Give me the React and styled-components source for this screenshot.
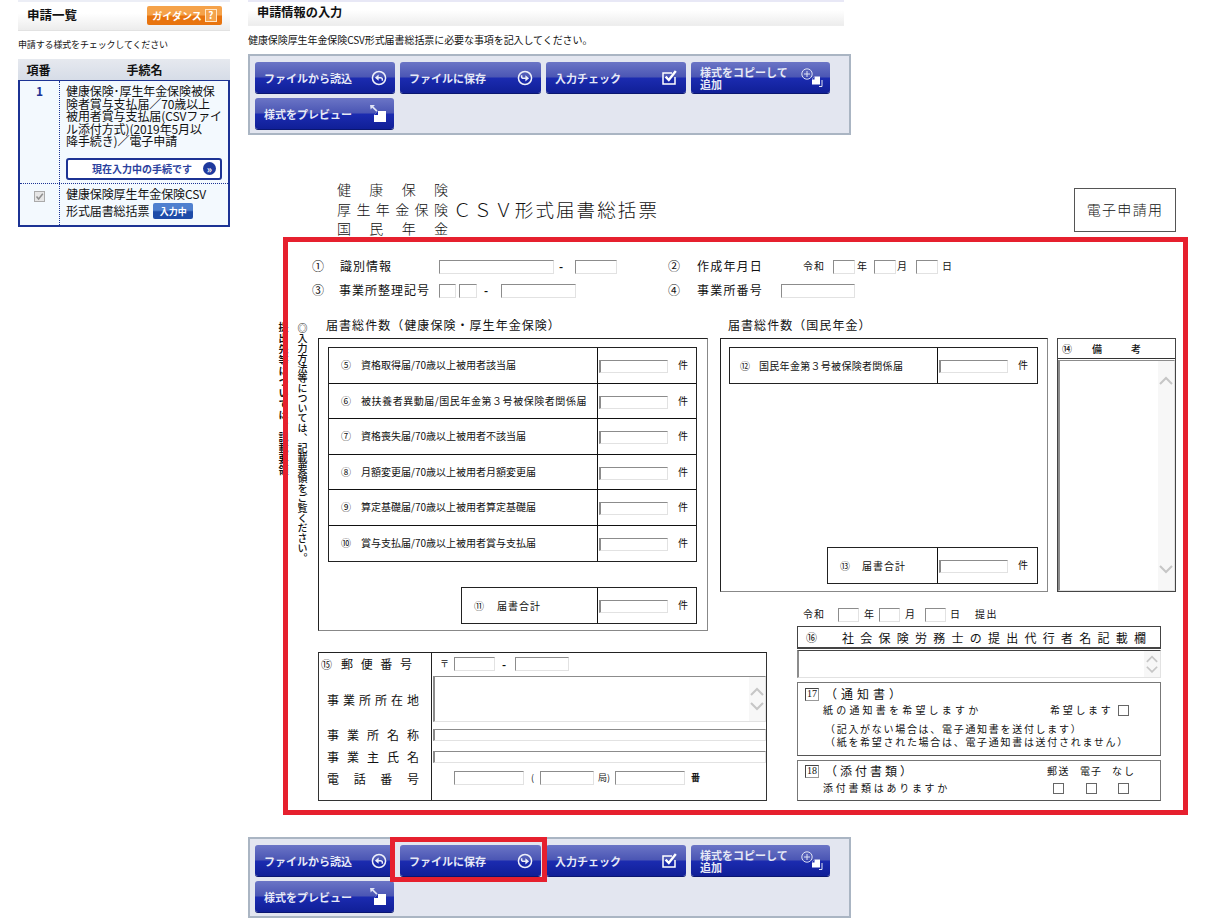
import React from "react";
import styled, { createGlobalStyle } from "styled-components";

const Global = createGlobalStyle`
  html, body { margin: 0; padding: 0; background: #fff; }
  body { font-family: "Noto Sans CJK JP", "Liberation Sans", sans-serif; color: #111; overflow: hidden; }
  * { box-sizing: border-box; }
`;

const Page = styled.div`
  position: relative;
  display: flex;
  width: 1211px;
  height: 920px;
  overflow: hidden;
`;

/* ---------- sidebar ---------- */
const Sidebar = styled.aside`
  flex: none;
  width: 212px;
  margin-left: 18px;
`;
const SideHeader = styled.header`
  display: flex;
  align-items: center;
  justify-content: space-between;
  height: 31px;
  padding: 0 8px 2px 9px;
  border-top: 2px solid #eceef6;
  border-bottom: 1px solid #e2e2e2;
  background: linear-gradient(#fff 40%, #ececec);
`;
const SideTitle = styled.h2`
  margin: 0;
  font-size: 12.5px;
  line-height: 16px;
  font-weight: 700;
`;
const GuideButton = styled.div`
  display: flex;
  align-items: center;
  justify-content: center;
  gap: 3px;
  width: 75px;
  height: 19px;
  border-radius: 2px;
  background: linear-gradient(#f5a24a 0 48%, #e8740f 52% 100%);
  color: #fff;
  font-size: 10px;
  font-weight: 700;
`;
const GuideMark = styled.span`
  display: flex;
  align-items: center;
  justify-content: center;
  width: 12px;
  height: 13px;
  border: 1px solid #ffe6c8;
  background: #f4a34c;
  font-size: 10px;
  line-height: 1;
`;
const SideHint = styled.p`
  margin: 8px 0 8px;
  font-size: 9px;
  line-height: 12px;
  letter-spacing: -0.15px;
  white-space: nowrap;
`;
const ProcHead = styled.div`
  display: flex;
  height: 21px;
  align-items: center;
  background: linear-gradient(#e6e9ef, #d6dce7);
  font-size: 12px;
  font-weight: 700;
`;
const ProcHeadNo = styled.span`
  width: 41px;
  text-align: center;
`;
const ProcHeadName = styled.span`
  flex: 1;
  text-align: center;
`;
const ProcBody = styled.div`
  height: 147px;
  border: 2px solid #1c3394;
  border-top-width: 1.5px;
  background: #f3f9fe;
`;
const ProcRow = styled.div`
  display: flex;
  height: ${(p) => p.$h}px;
  border-bottom: ${(p) => (p.$divide ? "1px dotted #1c3394" : "none")};
`;
const ProcNo = styled.div`
  flex: none;
  width: 40px;
  padding-top: ${(p) => p.$top}px;
  border-right: 1px dotted #1c3394;
  display: flex;
  justify-content: center;
  align-items: flex-start;
  color: #1c3394;
  font-size: 12px;
  font-weight: 700;
  line-height: 14px;
`;
const ProcCell = styled.div`
  flex: 1;
  padding: ${(p) => p.$top}px 6px 0 6px;
`;
const ProcText = styled.div`
  font-size: 12px;
  line-height: ${(p) => p.$lh}px;
  letter-spacing: -0.1px;
  white-space: nowrap;
`;
const CurrentButton = styled.div`
  display: flex;
  align-items: center;
  justify-content: flex-end;
  gap: 11px;
  width: 156px;
  height: 22px;
  margin-top: 10px;
  padding-right: 4px;
  border: 2px solid #1c3394;
  border-radius: 3px;
  background: #fff;
  color: #2b419e;
  font-size: 10px;
  font-weight: 700;
`;
const CurrentMark = styled.span`
  display: flex;
  align-items: center;
  justify-content: center;
  width: 13px;
  height: 13px;
  border-radius: 50%;
  background: #1f3a9e;
  color: #fff;
  font-size: 10px;
  line-height: 1;
`;
const CheckedBox = styled.span`
  display: flex;
  width: 11px;
  height: 11px;
  border: 1px solid #aaa;
  background: #e6e6e6;
`;
const InputBadge = styled.span`
  display: inline-flex;
  align-items: center;
  justify-content: center;
  width: 40px;
  height: 16px;
  margin-left: 4px;
  vertical-align: top;
  margin-top: 1px;
  border-radius: 2px;
  background: linear-gradient(#4f80cf 0 45%, #1d4ba8 55% 100%);
  color: #fff;
  font-size: 9px;
  font-weight: 700;
  letter-spacing: 0;
`;

/* ---------- main ---------- */
const Main = styled.main`
  flex: none;
  width: 945px;
  margin-left: 18px;
`;
const MainHeader = styled.header`
  display: flex;
  align-items: center;
  width: 596px;
  height: 26px;
  padding: 0 0 3px 9px;
  border-top: 2px solid #e8e8f6;
  border-bottom: 1px solid #eee;
  background: linear-gradient(#fff 35%, #ededed);
`;
const MainTitle = styled.h1`
  margin: 0;
  font-size: 12.2px;
  line-height: 14px;
  font-weight: 700;
`;
const MainHint = styled.p`
  margin: 8px 0 8px;
  font-size: 10px;
  line-height: 12px;
  letter-spacing: -0.08px;
  white-space: nowrap;
`;
const Toolbar = styled.div`
  display: flex;
  flex-wrap: wrap;
  align-content: flex-start;
  gap: 5px 5px;
  width: 603px;
  height: 81px;
  padding: 6px 5px;
  border: 2px solid #aab5c3;
  background: #e3e6f0;
`;
const ToolButton = styled.div`
  display: flex;
  align-items: center;
  justify-content: space-between;
  width: ${(p) => p.$w}px;
  height: 31px;
  padding: 0 ${(p) => p.$pr ?? 8}px 0 9px;
  border-radius: 3px;
  background: linear-gradient(#6b75c6 0, #4b56b4 48%, #1b2bb0 52%, #101f97 100%);
  box-shadow: 0 1px 0 #0a1670;
  color: #e6e9f6;
  font-size: 11px;
  font-weight: 700;
  line-height: 12px;
`;
const ToolLabel = styled.span`
  display: block;
  max-width: 92px;
`;

/* ---------- form sheet ---------- */
const Sheet = styled.section`
  width: 928px;
  margin-top: 45px;
  margin-bottom: 36px;
`;
const TitleRow = styled.div`
  display: flex;
  justify-content: space-between;
  align-items: flex-start;
  height: 60px;
  padding-left: 89px;
`;
const TitleLines = styled.div`
  display: flex;
  flex-direction: column;
`;
const TitleLine = styled.div`
  display: flex;
  align-items: center;
  height: 19.5px;
  font-size: 14px;
  line-height: 19.5px;
  font-weight: 300;
`;
const Justified = styled.span`
  display: block;
  flex: none;
  width: ${(p) => p.$w}px;
  margin-left: ${(p) => p.$ml || 0}px;
  font-size: ${(p) => p.$s || 12}px;
  text-align: justify;
  text-align-last: justify;
  white-space: normal;
`;
const TitleBig = styled.span`
  margin-left: 5px;
  font-size: 18.5px;
  letter-spacing: 2.1px;
  white-space: nowrap;
`;
const EBadge = styled.div`
  display: flex;
  align-items: center;
  justify-content: center;
  width: 102px;
  height: 44px;
  margin-top: 8px;
  padding-bottom: 2px;
  border: 1px solid #555;
  font-size: 14px;
  font-weight: 300;
  letter-spacing: 1.3px;
`;
const InfoRow = styled.div`
  display: flex;
  align-items: center;
  height: 14px;
  margin: ${(p) => p.$mt}px 0 0 ${(p) => p.$ml || 0}px;
  & > span { padding-bottom: 3px; }
`;
const Txt = styled.span`
  display: block;
  flex: none;
  width: ${(p) => (p.$w ? `${p.$w}px` : "auto")};
  margin-left: ${(p) => p.$ml || 0}px;
  font-size: ${(p) => p.$s || 12}px;
  letter-spacing: ${(p) => p.$ls || 0}px;
  font-weight: ${(p) => p.$b || 400};
  line-height: 14px;
  white-space: nowrap;
`;
const Field = styled.input.attrs({ type: "text", readOnly: true })`
  display: block;
  flex: none;
  width: ${(p) => (p.$w ? `${p.$w}px` : "100%")};
  height: ${(p) => p.$h || 14}px;
  margin: ${(p) => p.$mt || 0}px 0 0 ${(p) => p.$ml || 0}px;
  padding: 0;
  border: 1px solid #e2e2e2;
  border-top-color: #8c8c8c;
  border-left: ${(p) => (p.$thick ? 2 : 1)}px solid #8c8c8c;
  background: #fff;
  outline: none;
`;
const SheetGrid = styled.div`
  display: grid;
  grid-template-columns: 19px 23px 390px 12px 47px 30px 364px 15px;
  grid-template-rows: 22px 254px 16px 23px 170px;
  margin: 18px 0 0 28px;
`;
const Area = styled.div`
  grid-column: ${(p) => p.$c};
  grid-row: ${(p) => p.$r};
  min-width: 0;
`;
const VerticalNote = styled.div`
  padding-top: ${(p) => p.$pt}px;
  writing-mode: vertical-rl;
  font-size: 10px;
  line-height: 14px;
  letter-spacing: ${(p) => p.$ls || 0}px;
  font-weight: ${(p) => p.$b || 500};
  white-space: nowrap;
`;
const SectionHead = styled.div`
  padding: 2px 0 0 ${(p) => p.$pl}px;
  font-size: 12px;
  letter-spacing: 1.05px;
  line-height: 14px;
  white-space: nowrap;
`;
const CountBox = styled.div`
  display: flex;
  flex-direction: column;
  justify-content: ${(p) => (p.$spread ? "space-between" : "flex-start")};
  flex: none;
  width: ${(p) => (p.$w ? `${p.$w}px` : "auto")};
  height: 100%;
  padding: 8px 9px 7px 9px;
  border: 1px solid #222;
  border-right-color: #888;
  border-bottom-color: #888;
`;
const CountTable = styled.div`
  flex: none;
  width: ${(p) => p.$w}px;
  margin: ${(p) => p.$mt || 0}px 0 0 ${(p) => p.$ml || 0}px;
  border: 1px solid #222;
`;
const CountRow = styled.div`
  display: flex;
  height: ${(p) => p.$h || 35.5}px;
  border-bottom: ${(p) => (p.$last ? "none" : "1px solid #111")};
`;
const CountLabel = styled.div`
  display: flex;
  align-items: center;
  flex: none;
  width: ${(p) => p.$w}px;
  padding-left: ${(p) => p.$pl}px;
  border-right: 1px solid #111;
`;
const CountValue = styled.div`
  display: flex;
  flex: 1;
  align-items: flex-start;
  padding: 12px 0 0 1px;
`;
const CountUnit = styled.span`
  margin: -3px 0 0 10px;
  font-size: 10px;
  line-height: 16px;
`;
const TopRight = styled.div`
  display: flex;
  gap: 9px;
  height: 100%;
`;
const RemarkBox = styled.div`
  display: flex;
  flex-direction: column;
  width: 119px;
  height: 100%;
  border: 1px solid #444;
`;
const RemarkHead = styled.div`
  display: flex;
  align-items: center;
  flex: none;
  height: 20px;
  padding-left: 4px;
  border-bottom: 1px solid #333;
`;
const ScrollField = styled.div`
  display: flex;
  justify-content: flex-end;
  flex: ${(p) => (p.$h ? "none" : 1)};
  width: ${(p) => (p.$full ? "100%" : "auto")};
  height: ${(p) => (p.$h ? `${p.$h}px` : "auto")};
  margin: ${(p) => p.$m || 0};
  border: 1px solid #e2e2e2;
  border-top: ${(p) => p.$top || "1px solid #8c8c8c"};
  border-left: 2px solid #8c8c8c;
  background: #fff;
`;
const ScrollTrack = styled.div`
  display: flex;
  flex-direction: column;
  align-items: center;
  justify-content: ${(p) => (p.$tight ? "center" : "space-between")};
  gap: ${(p) => (p.$tight ? 1 : 0)}px;
  width: 16px;
  padding: ${(p) => p.$pad || 0};
  background: #f7f7f7;
  color: #c6c6c6;
`;
const AddressTable = styled.div`
  height: 149px;
  margin-top: 21px;
  border: 1px solid #333;
  border-top-color: #222;
`;
const AddrRow = styled.div`
  display: flex;
  height: ${(p) => p.$h}px;
`;
const AddrLabel = styled.div`
  display: flex;
  align-items: ${(p) => (p.$top ? "flex-start" : "center")};
  flex: none;
  width: 113px;
  padding: ${(p) => p.$top || 0}px 0 2px ${(p) => p.$pl ?? 8}px;
  border-right: 1px solid #222;
`;
const AddrValue = styled.div`
  display: flex;
  flex: 1;
  align-items: flex-start;
  min-width: 0;
  padding: ${(p) => p.$pt || 0}px 0 0 1px;
`;
const RightBottom = styled.div`
  display: flex;
  flex-direction: column;
`;
const AgentHead = styled.div`
  display: flex;
  align-items: center;
  height: 23px;
  margin-top: 4px;
  padding-left: 8px;
  border: 1px solid #444;
  border-bottom: 2px solid #444;
`;
const OptionBox = styled.div`
  height: ${(p) => p.$h}px;
  margin-top: 4px;
  padding-top: ${(p) => p.$pt}px;
  border: 1px solid #777;
  border-bottom-color: #555;
`;
const OptionLine = styled.div`
  display: flex;
  align-items: center;
  height: ${(p) => p.$h}px;
  margin-top: ${(p) => p.$mt || 0}px;
  padding-left: ${(p) => p.$pl || 0}px;
`;
const NumberMark = styled.span`
  display: flex;
  align-items: center;
  justify-content: center;
  flex: none;
  width: 14px;
  height: 13px;
  margin-left: 7px;
  border: 1px solid #444;
  border-right-color: #999;
  border-bottom-color: #999;
  font-family: "Liberation Serif", serif;
  font-size: 10px;
  line-height: 1;
`;
const Tick = styled.span`
  display: block;
  flex: none;
  width: 11px;
  height: 11px;
  margin-left: ${(p) => p.$ml || 0}px;
  border: 1px solid #666;
  background: #fff;
`;

/* ---------- annotations over the page ---------- */
const Callout = styled.div`
  position: absolute;
  left: ${(p) => p.$x}px;
  top: ${(p) => p.$y}px;
  width: ${(p) => p.$w}px;
  height: ${(p) => p.$h}px;
  border: 5px solid #e6202e;
  pointer-events: none;
`;

/* ---------- icons ---------- */
const IconCircleArrow = ({ down }) => (
  <svg width="16" height="16" viewBox="0 0 18 18" style={{ flex: "none", transform: down ? "rotate(180deg)" : "none" }}>
    <circle cx="9" cy="9" r="7.4" fill="none" stroke="#eef0fa" strokeWidth="1.7" />
    <path d="M4.4 8.6 8.6 5.2v6.8Z" fill="#eef0fa" />
    <path d="M8 8.6h2.6a2.2 2.2 0 0 1 2.2 2.2v1.2" fill="none" stroke="#eef0fa" strokeWidth="1.7" />
  </svg>
);
const IconChecked = () => (
  <svg width="17" height="17" viewBox="0 0 17 17" style={{ flex: "none" }}>
    <path d="M14 8v7H2V4h9" fill="none" stroke="#fff" strokeWidth="1.5" />
    <path d="M4.6 7.6 7.8 11 14.8 2" fill="none" stroke="#fff" strokeWidth="2.4" />
  </svg>
);
const IconCopy = () => (
  <svg width="24" height="24" viewBox="0 0 24 24" style={{ flex: "none" }}>
    <circle cx="8" cy="8" r="5.2" fill="none" stroke="#dfe3f5" strokeWidth="1" />
    <path d="M8 5v6M5 8h6" stroke="#dfe3f5" strokeWidth="1" />
    <path d="M15.5 10.5H21v8h-8v-5.500z" fill="#fff" />
    <path d="M15.500 10.500v3H13z" fill="#1b2bb0" />
    <path d="M23 14v6.500h-3" fill="none" stroke="#dfe3f5" strokeWidth="1" />
  </svg>
);
const IconPreview = () => (
  <svg width="22" height="24" viewBox="0 0 22 24" style={{ flex: "none" }}>
    <path d="M5 3h5L8.400 4.500 12.500 8.600 11.300 9.800 7.200 5.700 5.700 7.500z" fill="#dfe3f5" />
    <path d="M13 9h8v11H9v-7z" fill="#fff" />
    <path d="M13 9v4H9z" fill="#1b2bb0" />
  </svg>
);
const Chevron = ({ down, size = 14 }) => (
  <svg width={size} height={size * 0.72} viewBox="0 0 14 10" style={{ flex: "none" }}>
    <path d={down ? "M1 2 7 8 13 2" : "M1 8 7 2 13 8"} fill="none" stroke="currentColor" strokeWidth="2" />
  </svg>
);

const ToolbarSet = () => (
  <Toolbar>
    <ToolButton $w={140}><ToolLabel>ファイルから読込</ToolLabel><IconCircleArrow /></ToolButton>
    <ToolButton $w={141}><ToolLabel>ファイルに保存</ToolLabel><IconCircleArrow down /></ToolButton>
    <ToolButton $w={140}><ToolLabel>入力チェック</ToolLabel><IconChecked /></ToolButton>
    <ToolButton $w={139} $pr={7}><ToolLabel>様式をコピーして<br />追加</ToolLabel><IconCopy /></ToolButton>
    <ToolButton $w={139} $pr={7}><ToolLabel>様式をプレビュー</ToolLabel><IconPreview /></ToolButton>
  </Toolbar>
);

const insuredRows = [
  ["⑤", "資格取得届/70歳以上被用者該当届", 0],
  ["⑥", "被扶養者異動届/国民年金第３号被保険者関係届", 0.55],
  ["⑦", "資格喪失届/70歳以上被用者不該当届", 0],
  ["⑧", "月額変更届/70歳以上被用者月額変更届", 0],
  ["⑨", "算定基礎届/70歳以上被用者算定基礎届", 0],
  ["⑩", "賞与支払届/70歳以上被用者賞与支払届", 0],
];

const Count = ({ unit = "件" }) => (
  <CountValue>
    <Field $w={69} $h={13} $thick />
    <CountUnit>{unit}</CountUnit>
  </CountValue>
);

export default function App() {
  return (
    <Page>
      <Global />
      <Sidebar>
        <SideHeader>
          <SideTitle>申請一覧</SideTitle>
          <GuideButton>ガイダンス<GuideMark>?</GuideMark></GuideButton>
        </SideHeader>
        <SideHint>申請する様式をチェックしてください</SideHint>
        <ProcHead>
          <ProcHeadNo>項番</ProcHeadNo>
          <ProcHeadName>手続名</ProcHeadName>
        </ProcHead>
        <ProcBody>
          <ProcRow $h={103} $divide>
            <ProcNo $top={3}>1</ProcNo>
            <ProcCell $top={4}>
              <ProcText $lh={12.5}>
                健康保険･厚生年金保険被保<br />
                険者賞与支払届／70歳以上<br />
                被用者賞与支払届(CSVファイ<br />
                ル添付方式)(2019年5月以<br />
                降手続き)／電子申請
              </ProcText>
              <CurrentButton>現在入力中の手続です<CurrentMark>»</CurrentMark></CurrentButton>
            </ProcCell>
          </ProcRow>
          <ProcRow $h={41}>
            <ProcNo $top={7}>
              <CheckedBox>
                <svg width="9" height="9" viewBox="0 0 9 9"><path d="M1.5 4.5 3.600 7 7.800 1.800" fill="none" stroke="#8f8f8f" strokeWidth="1.5" /></svg>
              </CheckedBox>
            </ProcNo>
            <ProcCell $top={1}>
              <ProcText $lh={17}>
                健康保険厚生年金保険CSV<br />
                形式届書総括票<InputBadge>入力中</InputBadge>
              </ProcText>
            </ProcCell>
          </ProcRow>
        </ProcBody>
      </Sidebar>

      <Main>
        <MainHeader><MainTitle>申請情報の入力</MainTitle></MainHeader>
        <MainHint>健康保険厚生年金保険CSV形式届書総括票に必要な事項を記入してください。</MainHint>
        <ToolbarSet />

        <Sheet>
          <TitleRow>
            <TitleLines>
              <TitleLine><Justified $w={111} $s={14}>健 康 保 険</Justified></TitleLine>
              <TitleLine><Justified $w={111} $s={14}>厚 生 年 金 保 険</Justified><TitleBig>ＣＳＶ形式届書総括票</TitleBig></TitleLine>
              <TitleLine><Justified $w={111} $s={14}>国 民 年 金</Justified></TitleLine>
            </TitleLines>
            <EBadge>電子申請用</EBadge>
          </TitleRow>

          <InfoRow $mt={20} $ml={64}>
            <Txt $w={28} $s={12}>①</Txt>
            <Txt $w={99} $ls={1}>識別情報</Txt>
            <Field $w={115} />
            <Txt $w={21} $ml={5} $s={11} $b={700}>-</Txt>
            <Field $w={42} $ml={-5} />
            <Txt $w={29} $ml={51} $s={12}>②</Txt>
            <Txt $w={106} $ls={1.2}>作成年月日</Txt>
            <Txt $w={30} $s={10} $ls={1}>令和</Txt>
            <Field $w={22} />
            <Txt $w={19} $ml={2} $s={10}>年</Txt>
            <Field $w={22} $ml={-2} />
            <Txt $w={20} $ml={1} $s={10}>月</Txt>
            <Field $w={22} $ml={-1} />
            <Txt $ml={4} $s={10}>日</Txt>
          </InfoRow>
          <InfoRow $mt={10} $ml={64}>
            <Txt $w={27} $s={12}>③</Txt>
            <Txt $w={100} $ls={1}>事業所整理記号</Txt>
            <Field $w={17} />
            <Field $w={18} $ml={3} />
            <Txt $w={17} $ml={7} $s={11} $b={700}>-</Txt>
            <Field $w={75} />
            <Txt $w={29} $ml={92} $s={12}>④</Txt>
            <Txt $w={84} $ls={1.2}>事業所番号</Txt>
            <Field $w={74} />
          </InfoRow>

          <SheetGrid>
            <Area $c="1 / 2" $r="1 / 5">
              <VerticalNote $b={700} $pt={6} $ls={1}>提出先等については、記載要領</VerticalNote>
            </Area>
            <Area $c="2 / 3" $r="1 / 6">
              <VerticalNote $pt={7}>◎入力方法等については、記載要領をご覧ください。</VerticalNote>
            </Area>
            <Area $c="3 / 4" $r="1 / 2">
              <SectionHead $pl={8}>届書総件数（健康保険・厚生年金保険）</SectionHead>
            </Area>
            <Area $c="5 / 9" $r="1 / 2">
              <SectionHead $pl={8}>届書総件数（国民年金）</SectionHead>
            </Area>

            <Area $c="3 / 4" $r="2 / 5">
              <CountBox>
                <CountTable $w={369}>
                  {insuredRows.map(([n, label, ls], i) => (
                    <CountRow key={n} $last={i === insuredRows.length - 1}>
                      <CountLabel $w={269} $pl={12}>
                        <Txt $w={20} $s={10}>{n}</Txt>
                        <Txt $s={10} $ls={ls}>{label}</Txt>
                      </CountLabel>
                      <Count />
                    </CountRow>
                  ))}
                </CountTable>
                <CountTable $w={236} $ml={133} $mt={25}>
                  <CountRow $last $h={35}>
                    <CountLabel $w={136} $pl={12}>
                      <Txt $w={23} $s={10}>⑪</Txt>
                      <Txt $s={10} $ls={1}>届書合計</Txt>
                    </CountLabel>
                    <Count />
                  </CountRow>
                </CountTable>
              </CountBox>
            </Area>

            <Area $c="5 / 9" $r="2 / 3">
              <TopRight>
                <CountBox $w={328} $spread>
                  <CountTable $w={309} $ml={-1}>
                    <CountRow $last $h={35}>
                      <CountLabel $w={208} $pl={10}>
                        <Txt $w={19} $s={10}>⑫</Txt>
                        <Txt $s={10} $ls={0.3}>国民年金第３号被保険者関係届</Txt>
                      </CountLabel>
                      <Count />
                    </CountRow>
                  </CountTable>
                  <CountTable $w={211} $ml={97}>
                    <CountRow $last $h={35}>
                      <CountLabel $w={110} $pl={12}>
                        <Txt $w={22} $s={10}>⑬</Txt>
                        <Txt $s={10} $ls={1}>届書合計</Txt>
                      </CountLabel>
                      <Count />
                    </CountRow>
                  </CountTable>
                </CountBox>
                <RemarkBox>
                  <RemarkHead>
                    <Txt $w={30} $s={10} $b={500}>⑭</Txt>
                    <Txt $w={39} $s={10} $b={500}>備</Txt>
                    <Txt $s={10} $b={500}>考</Txt>
                  </RemarkHead>
                  <ScrollField $m="1px 0 0 0">
                    <ScrollTrack $pad="15px 0 16px">
                      <Chevron />
                      <Chevron down />
                    </ScrollTrack>
                  </ScrollField>
                </RemarkBox>
              </TopRight>
            </Area>

            <Area $c="3 / 6" $r="5 / 6">
              <AddressTable>
                <AddrRow $h={23}>
                  <AddrLabel $pl={2}>
                    <Txt $w={20} $s={11}>⑮</Txt>
                    <Justified $w={71}>郵 便 番 号</Justified>
                  </AddrLabel>
                  <AddrValue $pt={4}>
                    <Txt $w={14} $ml={7} $s={9}>〒</Txt>
                    <Field $w={41} />
                    <Txt $w={20} $ml={7} $s={11} $b={700}>-</Txt>
                    <Field $w={54} $ml={-7} />
                  </AddrValue>
                </AddrRow>
                <AddrRow $h={48}>
                  <AddrLabel><Justified $w={92}>事 業 所 所 在 地</Justified></AddrLabel>
                  <AddrValue>
                    <ScrollField $h={46} $full>
                      <ScrollTrack $pad="10px 0 10px">
                        <Chevron />
                        <Chevron down />
                      </ScrollTrack>
                    </ScrollField>
                  </AddrValue>
                </AddrRow>
                <AddrRow $h={22}>
                  <AddrLabel><Justified $w={92}>事 業 所 名 称</Justified></AddrLabel>
                  <AddrValue $pt={5}><Field $h={12} $thick /></AddrValue>
                </AddrRow>
                <AddrRow $h={22}>
                  <AddrLabel><Justified $w={92}>事 業 主 氏 名</Justified></AddrLabel>
                  <AddrValue $pt={5}><Field $h={12} $thick /></AddrValue>
                </AddrRow>
                <AddrRow $h={32}>
                  <AddrLabel $top={2}><Justified $w={92}>電 話 番 号</Justified></AddrLabel>
                  <AddrValue $pt={3}>
                    <Field $w={70} $ml={21} />
                    <Txt $w={16} $ml={7} $s={9}>(</Txt>
                    <Field $w={54} $ml={-7} />
                    <Txt $w={17} $ml={4} $s={9}>局)</Txt>
                    <Field $w={70} />
                    <Txt $ml={6} $s={9} $b={700}>番</Txt>
                  </AddrValue>
                </AddrRow>
              </AddressTable>
            </Area>

            <Area $c="7 / 8" $r="4 / 6">
              <RightBottom>
                <InfoRow $mt={0} $ml={6}>
                  <Txt $w={35} $s={10} $ls={1}>令和</Txt>
                  <Field $w={21} />
                  <Txt $w={15} $ml={5} $s={10}>年</Txt>
                  <Field $w={21} />
                  <Txt $w={20} $ml={5} $s={10}>月</Txt>
                  <Field $w={21} />
                  <Txt $w={25} $ml={4} $s={10}>日</Txt>
                  <Txt $s={10} $ls={1.5}>提出</Txt>
                </InfoRow>
                <AgentHead>
                  <Txt $w={36} $s={11}>⑯</Txt>
                  <Justified $w={304} $s={12}>社 会 保 険 労 務 士 の 提 出 代 行 者 名 記 載 欄</Justified>
                </AgentHead>
                <ScrollField $h={28} $m="1px 0 0 0" $top="1px solid #444">
                  <ScrollTrack $tight>
                    <Chevron size={12} />
                    <Chevron size={12} down />
                  </ScrollTrack>
                </ScrollField>
                <OptionBox $h={74} $pt={4}>
                  <OptionLine $h={14}>
                    <NumberMark>17</NumberMark>
                    <Txt $ml={6} $s={12} $ls={4}>（通知書）</Txt>
                  </OptionLine>
                  <OptionLine $h={14} $mt={2} $pl={25}>
                    <Txt $w={227} $s={10} $ls={3.2}>紙の通知書を希望しますか</Txt>
                    <Txt $w={68} $s={10} $ls={2.7}>希望します</Txt>
                    <Tick />
                  </OptionLine>
                  <OptionLine $h={13} $mt={5} $pl={27}>
                    <Txt $s={10} $ls={1.7}>（記入がない場合は、電子通知書を送付します）</Txt>
                  </OptionLine>
                  <OptionLine $h={13} $pl={27}>
                    <Txt $s={10} $ls={1.7}>（紙を希望された場合は、電子通知書は送付されません）</Txt>
                  </OptionLine>
                </OptionBox>
                <OptionBox $h={41} $pt={3}>
                  <OptionLine $h={14}>
                    <NumberMark>18</NumberMark>
                    <Txt $w={222} $ml={6} $s={12} $ls={3}>（添付書類）</Txt>
                    <Txt $w={33} $s={10} $ls={1.5}>郵送</Txt>
                    <Txt $w={32} $s={10} $ls={1}>電子</Txt>
                    <Txt $s={10} $ls={2}>なし</Txt>
                  </OptionLine>
                  <OptionLine $h={14} $mt={3} $pl={25}>
                    <Txt $w={230} $s={10} $ls={2.7}>添付書類はありますか</Txt>
                    <Tick />
                    <Tick $ml={22} />
                    <Tick $ml={21} />
                  </OptionLine>
                </OptionBox>
              </RightBottom>
            </Area>
          </SheetGrid>
        </Sheet>

        <ToolbarSet />
      </Main>

      <Callout $x={283} $y={237} $w={905} $h={578} />
      <Callout $x={390} $y={837} $w={157} $h={45} />
    </Page>
  );
}
